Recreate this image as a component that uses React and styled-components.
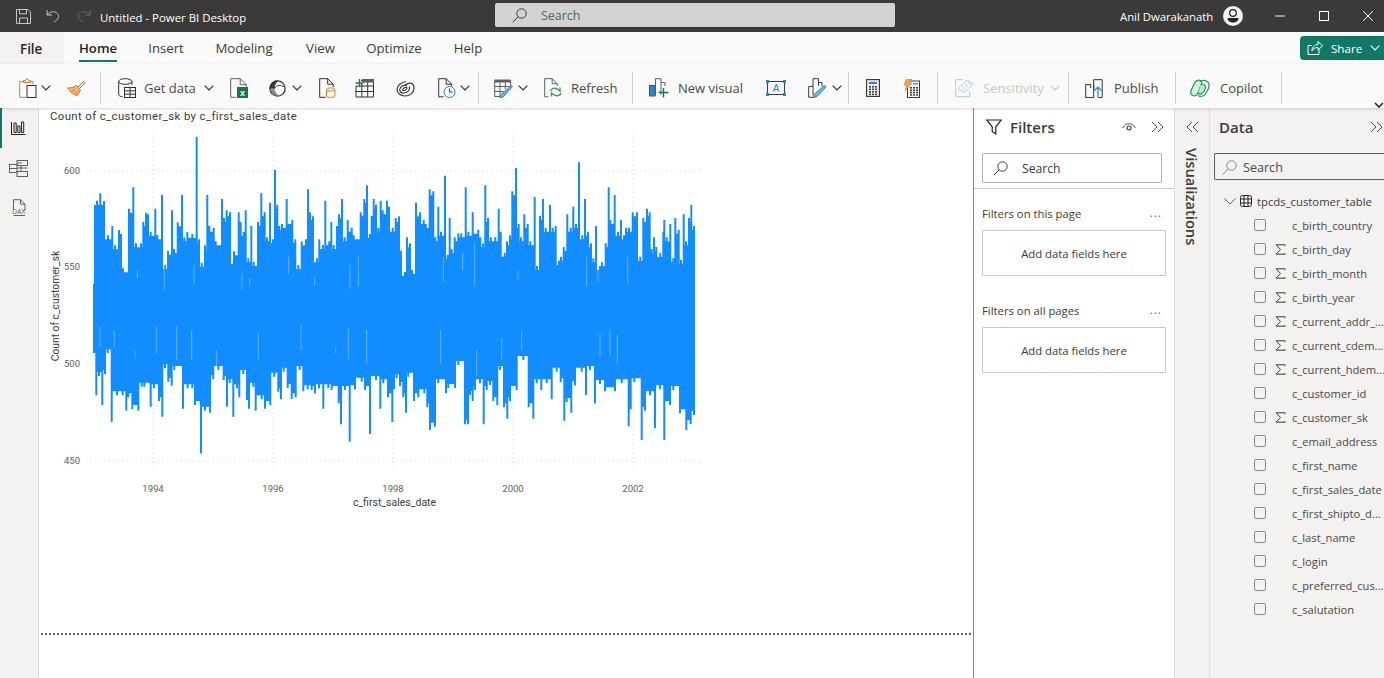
import React from "react";
import styled, { createGlobalStyle } from "styled-components";

const UI = `"Open Sans", "Noto Sans", "Liberation Sans", sans-serif`;
const DARK = "#323130";
const ORANGE = "#d97a1e";
const GREEN = "#107c41";
const BLUE = "#1a86d0";

const Global = createGlobalStyle`
  html, body { margin: 0; padding: 0; background: #fff; }
  body { font-family: ${UI}; overflow: hidden; }
  * { box-sizing: border-box; }
`;

const Page = styled.div`
  width: 1384px;
  height: 678px;
  display: flex;
  flex-direction: column;
  overflow: hidden;
`;

/* ---------- title bar ---------- */
const TitleBar = styled.header`
  height: 32px;
  background: #3b3a39;
  display: flex;
  align-items: center;
  flex: none;
  color: #fff;
`;
const BarIcon = styled.span`
  display: flex;
  margin-left: ${(p) => p.$ml}px;
`;
const AppTitle = styled.span`
  font-size: 11.4px;
  margin-left: 9px;
  width: 395px;
  margin-top: 3px;
  white-space: nowrap;
`;
const SearchPill = styled.div`
  width: 400px;
  height: 24px;
  margin-top: -2px;
  background: #d2d2d0;
  border-radius: 2px;
  display: flex;
  align-items: center;
  padding-left: 17px;
  gap: 14px;
  color: #3f6b60;
  font-size: 12.4px;
`;
const UserName = styled.span`
  font-size: 11.3px;
  margin-left: 225px;
  width: 103px;
  white-space: nowrap;
`;

/* ---------- tabs ---------- */
const TabBar = styled.nav`
  height: 32px;
  background: #fafafa;
  display: flex;
  align-items: stretch;
  flex: none;
  position: relative;
`;
const FileTab = styled.div`
  width: 64px;
  background: #f3f2f1;
  padding: 2px 0 0 20px;
  display: flex;
  align-items: center;
  font-size: 13.4px;
  font-weight: 600;
  color: #252423;
`;
const Tab = styled.div`
  width: ${(p) => p.$w}px;
  margin-left: ${(p) => p.$ml}px;
  padding-top: 4px;
  display: flex;
  align-items: center;
  justify-content: center;
  font-size: 13.2px;
  color: ${(p) => (p.$active ? "#252423" : "#3b3a39")};
  font-weight: ${(p) => (p.$active ? 600 : 400)};
  white-space: nowrap;
  border-bottom: 2px solid ${(p) => (p.$active ? "#117865" : "transparent")};
  height: 30px;
`;
const ShareButton = styled.button`
  margin-left: auto;
  margin-top: 4px;
  width: 84px;
  height: 24px;
  background: #117865;
  border: 0;
  border-radius: 4px 0 0 4px;
  color: #fff;
  font: 400 11.6px ${UI};
  display: flex;
  align-items: center;
  padding: 0 0 0 7px;
  gap: 8px;
`;

/* ---------- ribbon ---------- */
const Ribbon = styled.div`
  height: 44px;
  background: #fafafa;
  display: flex;
  align-items: center;
  padding: 4px 0 0 19px;
  flex: none;
  position: relative;
  z-index: 2;
  box-shadow: 0 1px 3px rgba(0, 0, 0, 0.18);
`;
const Tool = styled.span`
  display: flex;
  flex: none;
  margin-left: ${(p) => p.$ml || 0}px;
`;
const ToolLabel = styled.span`
  width: ${(p) => p.$w}px;
  margin-left: ${(p) => p.$ml || 0}px;
  font-size: 13px;
  color: ${(p) => (p.$off ? "#c8c6c4" : "#4a4846")};
  white-space: nowrap;
  flex: none;
`;
const Sep = styled.span`
  width: 1px;
  height: 32px;
  background: #d2d0ce;
  flex: none;
  margin-left: ${(p) => p.$ml}px;
`;
const RibbonCollapse = styled.span`
  position: absolute;
  right: 0;
  bottom: 0;
  display: flex;
`;

/* ---------- body ---------- */
const Main = styled.main`
  flex: 1;
  display: flex;
  min-height: 0;
`;
const NavRail = styled.aside`
  width: 39px;
  background: #f3f2f1;
  border-right: 1px solid #dcdbd9;
  flex: none;
  display: flex;
  flex-direction: column;
`;
const NavItem = styled.div`
  height: 40px;
  padding-right: 3px;
  display: flex;
  align-items: center;
  justify-content: center;
  border-left: 2px solid ${(p) => (p.$active ? "#117865" : "transparent")};
`;
const Canvas = styled.section`
  width: 935px;
  flex: none;
  background: #fff;
  border-right: 1px solid #8a8886;
  padding-top: 1px;
  display: flex;
  flex-direction: column;
`;
const ChartTitle = styled.div`
  height: 13px;
  line-height: 14px;
  margin-left: 11px;
  font-size: 11.4px;
  color: #3b3a39;
  font-family: "Roboto", "Liberation Sans", sans-serif;
  letter-spacing: 0.38px;
  white-space: nowrap;
`;
const ChartSvg = styled.svg`
  display: block;
  flex: none;
`;
const PageEnd = styled.div`
  margin: 111px 0 0 2px;
  width: 931px;
  height: 2px;
  background-image: repeating-linear-gradient(90deg, #605e5c 0 2px, transparent 2px 4px);
`;

/* ---------- filters ---------- */
const FiltersPane = styled.aside`
  width: 200px;
  flex: none;
  background: #fff;
  display: flex;
  flex-direction: column;
`;
const PaneHead = styled.div`
  height: 38px;
  display: flex;
  align-items: center;
  padding-left: ${(p) => p.$pl}px;
  flex: none;
`;
const PaneTitle = styled.span`
  font-size: 15px;
  font-weight: 600;
  color: #3b3a39;
  margin-left: ${(p) => p.$ml || 0}px;
`;
const FilterSearch = styled.div`
  margin: 7px 0 0 8px;
  width: 180px;
  height: 30px;
  border: 1px solid #b3b0ad;
  border-radius: 2px;
  display: flex;
  align-items: center;
  padding-left: 10px;
  gap: 14px;
  font-size: 12.2px;
  color: #3b3a39;
  flex: none;
`;
const PaneRule = styled.div`
  height: 1px;
  background: #c8c6c4;
  margin-top: 5px;
  flex: none;
`;
const FilterHead = styled.div`
  display: flex;
  align-items: center;
  justify-content: space-between;
  margin: ${(p) => p.$mt}px 12px 0 8px;
  height: 18px;
  font-size: 11.3px;
  color: #3b3a39;
`;
const Dots = styled.span`
  color: #2b7cd3;
  font-size: 12px;
  letter-spacing: 1px;
  line-height: 10px;
`;
const DropBox = styled.div`
  margin: 8px 0 0 8px;
  width: 184px;
  height: 46px;
  border: 1px solid #c8c6c4;
  border-radius: 1px;
  display: flex;
  align-items: center;
  justify-content: center;
  font-size: 11.3px;
  color: #3b3a39;
  flex: none;
`;

/* ---------- visualizations strip ---------- */
const VizStrip = styled.aside`
  width: 36px;
  flex: none;
  background: #f3f2f1;
  border-left: 1px solid #e1dfdd;
  border-right: 1px solid #e1dfdd;
  display: flex;
  flex-direction: column;
  align-items: center;
  padding-top: 13px;
`;
const VizLabel = styled.span`
  writing-mode: vertical-rl;
  font-size: 14.7px;
  font-weight: 600;
  color: #3b3a39;
  margin-top: 15px;
  line-height: 16px;
`;

/* ---------- data ---------- */
const DataPane = styled.aside`
  flex: 1;
  min-width: 0;
  background: #f3f2f1;
  display: flex;
  flex-direction: column;
  position: relative;
`;
const DataSearch = styled.div`
  margin: 7px 0 0 4px;
  height: 27px;
  border: 1px solid #605e5c;
  border-right: 0;
  border-radius: 2px 0 0 2px;
  display: flex;
  align-items: center;
  padding: 1px 0 0 7px;
  gap: 6px;
  font-size: 12.6px;
  color: #4a4846;
  flex: none;
`;
const TableRow = styled.div`
  height: 24px;
  margin-top: 9px;
  padding-left: 14px;
  display: flex;
  align-items: center;
  font-size: 11.3px;
  color: #3b3a39;
  flex: none;
  white-space: nowrap;
`;
const FieldRow = styled.div`
  height: 24px;
  padding-left: 44px;
  display: flex;
  align-items: center;
  flex: none;
  font-size: 11.2px;
  color: #4a4846;
  white-space: nowrap;
`;
const Check = styled.span`
  width: 12px;
  height: 12px;
  border: 1px solid #8a8886;
  border-radius: 2px;
  flex: none;
`;
const SigmaSlot = styled.span`
  width: 26px;
  padding-left: 9px;
  display: flex;
  flex: none;
`;
const CollapseAbs = styled.span`
  margin-left: auto;
  display: flex;
`;

/* ---------- icons ---------- */
const Svg = ({ w, h, children, stroke = DARK, sw = 1 }) => (
  <svg width={w} height={h} viewBox={`0 0 ${w} ${h}`} fill="none" stroke={stroke} strokeWidth={sw}>
    {children}
  </svg>
);
const Chevron = ({ color = DARK }) => (
  <Svg w={10} h={6} stroke={color} sw={1.2}><path d="M.7.7 5 5 9.3.7" /></Svg>
);
const DoubleRight = ({ color = "#4a4846" }) => (
  <Svg w={14} h={12} stroke={color}><path d="M1 1l5 5-5 5M7 1l5 5-5 5" /></Svg>
);
const DoubleLeft = () => (
  <Svg w={13} h={12} stroke="#4a4846"><path d="M6 1 1 6l5 5M12 1 7 6l5 5" /></Svg>
);
const Magnifier = ({ color = DARK, size = 15 }) => (
  <svg width={size} height={size} viewBox="0 0 15 15" fill="none" stroke={color}>
    <circle cx="9.5" cy="5.5" r="4.7" />
    <path d="M6 9 .8 14.2" />
  </svg>
);
const Sigma = () => (
  <Svg w={11} h={11} stroke="#3b3a39"><path d="M10 2V.8H1l4.5 4.7L1 10.2h9V9" /></Svg>
);

const SaveIcon = () => (
  <Svg w={15} h={15} stroke="#c8c6c4">
    <path d="M.5.5h11.5l2.5 2.5v11.5H.5z" />
    <path d="M3.5.8v4h7V.8M3.5 14.3V9h8v5.3" />
  </Svg>
);
const UndoIcon = ({ color = "#c8c6c4", flip }) => (
  <svg width="14" height="14" viewBox="0 0 14 14" fill="none" stroke={color} style={flip ? { transform: "scaleX(-1)" } : undefined}>
    <path d="M1 1v5h5M1 6c3-4 8-4 10.500-1.500 2 2.500 1 6-3.500 8.500" />
  </svg>
);
const Avatar = () => (
  <svg width="20" height="20" viewBox="0 0 20 20">
    <circle cx="10" cy="10" r="10" fill="#f3f2f1" />
    <circle cx="10" cy="7" r="3.300" fill="none" stroke="#252423" strokeWidth="1.300" />
    <path d="M4.500 12h11c0 3-2.500 4.500-5.500 4.500S4.500 15 4.500 12z" fill="#252423" />
  </svg>
);
const ShareIcon = () => (
  <Svg w={16} h={16} stroke="#fff">
    <path d="M12 9.500V14.500H1V5.500H4.500" />
    <path d="M5 11c0-4 2.500-6.500 6-6.500V1.500L15.500 6 11 10V7.500c-3 0-5 1-6 3.500z" />
  </Svg>
);

const ClipboardIcon = () => (
  <Svg w={18} h={20}>
    <path stroke={ORANGE} d="M4.500 3.500H.7v15.800h6M11.500 3.500H14V6.500M4.500 4.500v-2h2a1.500 1.500 0 0 1 3 0h2v2z" />
    <rect x="8" y="7.500" width="9" height="12" fill="#fafafa" />
  </Svg>
);
const BrushIcon = () => (
  <Svg w={19} h={17}>
    <path d="M11 7 16.800 1.500 18 2.800 12.500 8.500" stroke="#6b6a69" />
    <path d="M9.500 5.500 13.500 10l-3 5.500C7 15 3 12 .5 8l5.500-.5z" fill="#f5b56e" stroke={ORANGE} />
    <path d="M4 12.500 8 9M7.500 14.500l3-3.500" stroke={ORANGE} />
  </Svg>
);
const GetDataIcon = () => (
  <Svg w={18} h={20}>
    <path d="M.7 3.500v13c0 1 1.500 2 3.800 2.300M14 3.500V7" />
    <ellipse cx="7.300" cy="3.500" rx="6.600" ry="2.800" />
    <rect x="6.500" y="9.500" width="11" height="10" fill="#fafafa" />
    <path d="M6.500 12.800h11M6.500 16.200h11M12 9.500v10" />
  </Svg>
);
const ExcelIcon = () => (
  <svg width="18" height="20" viewBox="0 0 18 20" fill="none" stroke="#605e5c">
    <path d="M.7.700h9.500l6 6v2M.7.700v18.600h5M10.200.700v6h6" />
    <rect x="7" y="9" width="11" height="11" fill={GREEN} stroke="none" />
    <text x="12.500" y="18" textAnchor="middle" fontSize="9" fontWeight="700" fill="#fff" stroke="none" fontFamily="Liberation Sans, sans-serif">x</text>
  </svg>
);
const DatasetHubIcon = () => (
  <Svg w={17} h={17}>
    <circle cx="8.500" cy="8.500" r="7.600" strokeWidth="1.300" stroke="#3b3a39" />
    <path d="M1 9c0-5 3-8 7.500-8C6 3 5 6 5.500 8.500 3.500 8 2 8.200 1 9z" fill="#3b3a39" />
    <path d="M5.500 8.500C5.800 12 8 15 11.500 15.500 8 16.500 2.500 15 1 9c1-.8 2.500-1 4.500-.5z" fill="#8a8886" stroke="none" />
    <path d="M5.500 8.500C8 5 11.500 4.500 15.500 7" stroke="#3b3a39" />
  </Svg>
);
const CylinderDocIcon = () => (
  <Svg w={17} h={20}>
    <path d="M.7 19.300V.700h8l5.500 5.500v2.800M8.700.700v5.500h5.500M.7 19.300h6" />
    <path stroke={ORANGE} d="M7.500 11.500v6.500c0 .8 2 1.400 4.200 1.400s4.200-.6 4.200-1.400v-6.500" />
    <ellipse cx="11.700" cy="11.500" rx="4.200" ry="1.600" stroke={ORANGE} />
  </Svg>
);
const TableAddIcon = () => (
  <svg width="19" height="19" viewBox="0 0 19 19" fill="none" stroke={DARK}>
    <path d="M6 1.500h12.500M18.500 1v17H1V7" />
    <path d="M1 7h17.500M1 12.500h17.500M6.800 4v14M12.700 2v16" />
    <rect x="7" y="0" width="12" height="3.500" fill="#605e5c" stroke="none" />
    <path d="M4.500 0v8M.5 4h8" stroke={GREEN} strokeWidth="1.400" />
  </svg>
);
const SpiralIcon = () => (
  <Svg w={19} h={17} stroke="#3b3a39" sw={1.2}>
    <path d="M9 5.500C13 1.500 18 3 18 8c0 5-4.500 8-9 8-4.500 0-8-3-8-6.500C1 5 6 2 10 1.500" />
    <path d="M13.500 6.500C14.500 10 11 13 7.500 13 5 13 3.500 11.500 3.800 9.500 4.200 6.500 8 4.500 11 5.500" />
    <path d="M6.500 10c1 1 4 .5 4.500-2-.3-1.200-3-1-4.500 2z" />
  </Svg>
);
const ClockDocIcon = () => (
  <Svg w={18} h={20}>
    <path d="M5.500 18.800H.7V.700h7.500l5.500 5.500v2M8.200.700v5.500h5.500" />
    <circle cx="11.500" cy="14" r="5.500" stroke={BLUE} fill="#fafafa" />
    <path d="M11.500 10.500V14h3" stroke={DARK} />
  </Svg>
);
const TableEditIcon = () => (
  <svg width="19" height="19" viewBox="0 0 19 19" fill="none" stroke="#605e5c">
    <path d="M.7 1.500h16v7M.7 1.500v16h6" />
    <rect x="0.500" y="0.500" width="16" height="3" fill="#605e5c" stroke="none" />
    <path d="M.7 7.500h15M.7 12.500h9M6 3.500v14M11.300 3.500v7" />
    <path d="M17.500 6.500l1 1L9 18l-3 .8.800-3z" fill="#73b4e8" stroke={BLUE} />
  </svg>
);
const RefreshIcon = () => (
  <Svg w={18} h={20}>
    <path d="M4.500 18.800H.7V.700h7.500l5 5v2.300M8.200.700v5h5" stroke="#605e5c" />
    <path stroke="#3a9a53" strokeWidth="1.400" d="M6.500 13c.5-2.500 4.500-4 7.500-1.500l2 1.500V9.500M17 15c-.5 2.500-4.500 4-7.500 1.500L7.500 15v3.500" />
  </Svg>
);
const NewVisualIcon = () => (
  <Svg w={20} h={20}>
    <rect x="0.500" y="7.500" width="5.500" height="10.500" fill="#2b88d8" stroke="#1a5fa0" />
    <path d="M6.500 17.500V.700h5.500v16M12.500 4.500H16V8" stroke="#605e5c" />
    <path d="M14.500 10v9.500M9.500 14.500h10" stroke={GREEN} strokeWidth="1.400" />
  </Svg>
);
const TextBoxIcon = () => (
  <svg width="20" height="16" viewBox="0 0 20 16" fill="none" stroke="#3b3a39">
    <rect x="1.500" y="1.500" width="17" height="13" />
    <rect x="0" y="0" width="3" height="3" fill={BLUE} stroke="none" />
    <rect x="17" y="0" width="3" height="3" fill={BLUE} stroke="none" />
    <rect x="0" y="13" width="3" height="3" fill={BLUE} stroke="none" />
    <rect x="17" y="13" width="3" height="3" fill={BLUE} stroke="none" />
    <text x="10" y="12" textAnchor="middle" fontSize="10" fill={BLUE} stroke="none" fontFamily="Liberation Sans, sans-serif">A</text>
  </svg>
);
const VisualEditIcon = () => (
  <Svg w={19} h={20}>
    <path d="M5 17.500V.700h5.500v7M10.500 4.500h3.500v4M.7 19.300V8.500H5M.7 19.300h6" stroke="#3b3a39" />
    <path d="M16.500 7.500l1.500 1.500L9 18.500l-3.500 1 1-3.500z" fill="#73b4e8" stroke={BLUE} />
  </Svg>
);
const CalcIcon = () => (
  <svg width="14" height="18" viewBox="0 0 14 18">
    <rect x=".6" y=".6" width="12.800" height="16.800" fill="none" stroke="#3b3a39" strokeWidth="1.200" />
    <rect x="3" y="2.700" width="8" height="2.300" fill="#2b88d8" />
    {[0, 1, 2].flatMap((c) => [0, 1, 2, 3].map((r) => (
      <rect key={`${c}${r}`} x={3 + c * 3} y={7 + r * 2.500} width="2" height="1.600" fill="#3b3a39" />
    )))}
  </svg>
);
const QuickCalcIcon = () => (
  <svg width="17" height="19" viewBox="0 0 17 19">
    <rect x="4.500" y="2" width="12" height="16.500" fill="none" stroke="#3b3a39" />
    {[0, 1, 2].flatMap((c) => [0, 1, 2, 3].map((r) => (
      <rect key={`${c}${r}`} x={7 + c * 3} y={8 + r * 2.400} width="2" height="1.500" fill="#3b3a39" />
    )))}
    <rect x="10" y="4" width="5" height="1.500" fill="#8a8886" />
    <path d="M3.500 0H9L6.500 4H9L2 12l2-6H1z" fill="#f5a14a" stroke={ORANGE} strokeWidth=".6" />
  </svg>
);
const SensitivityIcon = () => (
  <Svg w={19} h={19} stroke="#a6cfea">
    <path d="M.7.700h7.500M.7.700v17h14V12" />
    <path d="M3 9.500 11 2c1-1 2-1 3 0s4.500 1.500 3.500 3l-8 8.500z" />
    <path d="M7 7.500l3 3M10 5l3 3M12.500 2.500l3 3" />
  </Svg>
);
const PublishIcon = () => (
  <Svg w={19} h={19}>
    <path d="M5.500 5.500H.7v13h5M5.700 18.500h3V5.500M8.700 10.500V.700h8.500V18.500H14M5.700 5.500V9" />
    <path d="M13 19V8.500M9.500 11.500 13 8l3.500 3.500" stroke={BLUE} strokeWidth="1.200" />
  </Svg>
);
const CopilotIcon = () => (
  <Svg w={20} h={18} stroke="#1f9a5a" sw={1.2}>
    <path d="M4.500 4C5.500 1.500 9 0 11 2c1 1 .8 2.500.2 3.500L8 14c-.8 2.300-3.500 3.500-5.500 2.500C.5 15.500.5 13 1.300 11z" fill="#d7efdf" />
    <path d="M10 2.500c3.500-2 8-1 9 2.500.5 2-.5 4.500-1.500 6.500l-2 3.500c-1.500 2.500-5.500 3-7.500 1.500" />
    <path d="M11 5.500c2.500-.8 5 .5 4.500 3.500-.3 2-2 4.500-3.500 5.500-1.500 1-3.500.5-3.800-1" fill="#bde6cc" />
  </Svg>
);
const FunnelIcon = () => (
  <Svg w={16} h={16} stroke="#252423" sw={1.2}>
    <path d="M.8 1h14.400L9.800 7.800V15l-3.600-2.500V7.800z" />
  </Svg>
);
const EyeIcon = () => (
  <Svg w={14} h={9} stroke="#3b3a39">
    <path d="M.7 5C3 1.500 5 .8 7 .8s4 .7 6.300 4.200" />
    <circle cx="7" cy="5" r="2" strokeWidth="1.200" />
  </Svg>
);
const GridGlobeIcon = () => (
  <Svg w={12} h={12} stroke="#252423">
    <rect x=".5" y=".5" width="11" height="11" rx="2" />
    <path d="M4 .5v11M8 .5v11M.5 4h11M.5 8h11" />
  </Svg>
);
const ReportIcon = () => (
  <Svg w={15} h={14} stroke="#252423">
    <path d="M.5 1v12.500h14" />
    <path d="M3 2h2.200v9.500H3zM6.800 5h2.200v6.500H6.800zM10.500 1h2.200v10.500h-2.200z" />
  </Svg>
);
const ModelIcon = () => (
  <Svg w={19} h={17} stroke="#605e5c">
    <rect x="8" y=".5" width="10.500" height="5" />
    <rect x="8" y="11.500" width="10.500" height="5" />
    <rect x=".5" y="4.500" width="7.500" height="8" />
    <path d="M.5 8.500H8M8 8h4v3.500M12 5.500V8h6.500M8 3H13" />
  </Svg>
);
const DaxIcon = () => (
  <svg width="18" height="18" viewBox="0 0 18 18" fill="none" stroke="#605e5c">
    <path d="M3.500 10V.7h7l4.500 4.500v6.300M10.500.7v4.500H15M3.500 16.500h11.500" />
    <text x="9" y="14.500" textAnchor="middle" fontSize="6.500" fill="#605e5c" stroke="none" fontFamily="Liberation Sans, sans-serif">DAX</text>
  </svg>
);

/* ---------- chart data read from the picture (3x crop coordinates) ---------- */
const top1 = [[30,225],[36,212],[46,190],[57,213],[69,316],[82,288],[90,346],[102,300],[108,312],[114,415],[132,236],[145,172],[153,340],[168,340],[175,276],[183,248],[189,253],[197,306],[211,236],[217,316],[231,195],[240,404],[249,362],[261,241],[267,357],[278,277],[291,195],[298,322],[307,306],[322,312],[335,20],[342,328],[350,398],[360,346],[367,195],[373,287],[386,293],[392,334],[411,207],[417,264],[425,241],[435,247],[441,402],[447,364],[461,247],[467,276],[476,306],[482,241],[490,385],[499,288],[506,396],[519,276],[529,189],[539,247],[546,322],[555,218],[564,328],[570,120],[577,224],[583,288],[591,282],[605,207],[622,270],[631,328],[640,405],[650,334],[663,328],[669,178],[675,247],[684,259],[696,385],[703,328],[714,345],[721,212],[733,334],[739,276],[746,345],[756,288],[762,253],[771,207],[779,322],[788,270],[800,293],[806,316],[827,247],[838,207],[846,166],[855,312],[860,258],[866,207],[873,224],[880,293],[887,212],[893,241],[906,212],[912,230]];
const top2 = [[8,293],[17,264],[27,259],[33,362],[45,426],[51,322],[60,340],[66,420],[78,218],[90,247],[101,270],[107,282],[119,178],[130,184],[136,322],[145,230],[153,305],[165,137],[173,374],[179,264],[185,358],[194,322],[205,310],[214,310],[227,172],[235,305],[248,247],[265,299],[271,322],[279,340],[286,166],[294,264],[302,322],[316,322],[326,236],[332,305],[344,368],[351,334],[360,316],[367,184],[378,114],[386,282],[393,322],[403,253],[413,282],[421,334],[434,201],[441,408],[450,258],[459,207],[467,293],[480,224],[488,293],[497,288],[507,392],[513,380],[521,351],[532,253],[542,293],[550,230],[558,282],[567,97],[577,316],[585,207],[594,305],[603,340],[610,385],[618,288],[630,408],[636,397],[647,340],[656,172],[661,270],[674,195],[684,305],[693,270],[702,316],[708,293],[717,293],[728,247],[741,247],[751,380],[760,264],[771,236],[779,247],[785,357],[792,322],[799,351],[811,369],[820,305],[823,270],[830,322],[841,282],[850,385],[856,264],[866,299],[873,390],[881,253],[888,334],[897,264],[904,224],[912,288]];
const bot1 = [[34,226],[42,168],[52,255],[60,162],[68,100],[80,306],[96,226],[113,226],[124,272],[130,232],[142,267],[160,272],[170,200],[178,200],[197,260],[207,205],[222,243],[232,290],[240,145],[250,185],[260,197],[268,150],[294,266],[308,205],[322,205],[330,255],[348,400],[360,272],[375,278],[385,178],[400,150],[416,180],[426,260],[434,190],[445,290],[456,205],[463,232],[475,162],[486,240],[492,266],[505,200],[512,272],[530,238],[540,266],[556,255],[568,170],[580,215],[588,238],[596,155],[608,204],[620,237],[632,232],[644,150],[655,214],[668,208],[680,210],[690,220],[702,205],[715,266],[730,205],[740,210],[761,250],[768,313],[780,210],[794,365],[810,208],[830,185],[840,210],[855,342],[873,180],[886,266],[895,190],[909,232]];
const bot2 = [[7,306],[12,208],[20,175],[30,198],[40,232],[48,278],[55,170],[72,243],[85,232],[103,220],[112,262],[120,330],[135,320],[145,190],[168,220],[175,204],[195,204],[205,135],[225,313],[234,313],[240,225],[248,243],[255,210],[270,190],[281,313],[290,210],[300,195],[310,243],[322,255],[330,150],[342,262],[352,296],[360,243],[380,210],[400,120],[416,262],[430,296],[440,190],[454,210],[470,190],[485,238],[500,155],[512,187],[523,302],[530,246],[544,278],[555,196],[575,155],[588,225],[600,150],[615,250],[630,192],[645,214],[675,214],[695,190],[716,319],[722,268],[733,187],[755,360],[765,272],[780,226],[795,325],[810,208],[823,360],[840,255],[850,210],[870,280],[889,330],[902,313],[912,285]];

/* pale slits inside the solid band: [x, from, to] in the same crop coordinates */
const slitsTop1 = [[157,420,445],[238,405,480],[327,405,462],[471,430,480],[494,445,465],[611,380,432],[689,440,468],[795,405,475],[820,380,470]];
const slitsTop2 = [[160,380,455],[218,370,420],[254,340,465],[384,420,450],[590,380,470],[624,400,455],[713,380,460]];
const slitsBot1 = [[45,20,80],[88,30,80],[150,90,110],[214,20,100],[275,20,120],[320,30,120],[395,90,150],[520,40,120],[648,15,90],[752,85,100],[790,25,120],[845,30,130]];
const slitsBot2 = [[152,30,130],[260,90,170],[335,55,120],[395,35,90],[630,40,110],[660,30,105],[682,45,130]];

const toPts = (list, ox, oy) => list.map(([x, y]) => [ox + x / 3, oy + y / 3]);
const topPts = [...toPts(top1, 85, 130), ...toPts(top2, 390, 130)];
const botPts = [...toPts(bot1, 85, 320), ...toPts(bot2, 390, 320)];

const f = (n) => n.toFixed(1);

function buildEnvelope() {
  const HALF = 1;
  let d = `M93 320 V284 `;
  topPts.forEach(([x, y], i) => {
    d += `H${f(x - HALF)} V${f(y)} H${f(x + HALF)} `;
    const nx = topPts[i + 1];
    if (nx) d += `V${f(Math.min(Math.max(y, nx[1]) + 4, 285))} `;
  });
  d += `H695 V320 `;
  const rev = [...botPts].reverse();
  rev.forEach(([x, y], i) => {
    d += `H${f(x + HALF)} V${f(y)} H${f(x - HALF)} `;
    const nx = rev[i + 1];
    if (nx) d += `V${f(Math.max(Math.min(y, nx[1]) - 4, 345))} `;
  });
  d += `V353 H93 Z`;
  return d;
}
const slit = (list, ox, oy) =>
  list.map(([x, a, b]) => `M${f(ox + x / 3)} ${f(oy + a / 3)}V${f(oy + b / 3)}`).join("");
const ENVELOPE = buildEnvelope();
const SLITS =
  slit(slitsTop1, 85, 130) + slit(slitsTop2, 390, 130) + slit(slitsBot1, 85, 320) + slit(slitsBot2, 390, 320);

const xTicks = [[153, "1994"], [273, "1996"], [393, "1998"], [513, "2000"], [633, "2002"]];
const yTicks = [[171, "600"], [267, "550"], [364, "500"], [461, "450"]];
const AXIS_FONT = "Roboto, Liberation Sans, sans-serif";

const Chart = () => (
  <ChartSvg width="665" height="400" viewBox="39 122 665 400">
    {xTicks.map(([x]) => (
      <line key={x} x1={x} x2={x} y1="133" y2="467" stroke="#dcdcdc" strokeDasharray="1.500 3" />
    ))}
    {yTicks.map(([y]) => (
      <line key={y} x1="86" x2="701" y1={y} y2={y} stroke="#dcdcdc" strokeDasharray="1.500 3" />
    ))}
    <path d={ENVELOPE} fill="#118dff" />
    <path d={SLITS} stroke="#fff" strokeOpacity=".35" strokeWidth="1" fill="none" />
    {yTicks.map(([y, t]) => (
      <text key={t} x="80" y={y + 3} textAnchor="end" fontSize="9.500" fill="#605e5c" fontFamily={AXIS_FONT}>{t}</text>
    ))}
    {xTicks.map(([x, t]) => (
      <text key={t} x={x} y="492" textAnchor="middle" fontSize="9.500" fill="#605e5c" fontFamily={AXIS_FONT}>{t}</text>
    ))}
    <text x="394.500" y="506" textAnchor="middle" fontSize="10.500" fill="#3b3a39" fontFamily={AXIS_FONT}>c_first_sales_date</text>
    <text transform="translate(59 306) rotate(-90)" textAnchor="middle" fontSize="10.300" fill="#3b3a39" fontFamily={AXIS_FONT}>Count of c_customer_sk</text>
  </ChartSvg>
);

const fields = [
  ["c_birth_country", false],
  ["c_birth_day", true],
  ["c_birth_month", true],
  ["c_birth_year", true],
  ["c_current_addr_...", true],
  ["c_current_cdem...", true],
  ["c_current_hdem...", true],
  ["c_customer_id", false],
  ["c_customer_sk", true],
  ["c_email_address", false],
  ["c_first_name", false],
  ["c_first_sales_date", false],
  ["c_first_shipto_d...", false],
  ["c_last_name", false],
  ["c_login", false],
  ["c_preferred_cus...", false],
  ["c_salutation", false],
];

export default function App() {
  return (
    <Page>
      <Global />
      <TitleBar>
        <BarIcon $ml={16}><SaveIcon /></BarIcon>
        <BarIcon $ml={15}><UndoIcon /></BarIcon>
        <BarIcon $ml={17}><UndoIcon color="#6b6a69" flip /></BarIcon>
        <AppTitle>Untitled - Power BI Desktop</AppTitle>
        <SearchPill>
          <Magnifier color="#3b3a39" />
          Search
        </SearchPill>
        <UserName>Anil Dwarakanath</UserName>
        <Avatar />
        <BarIcon $ml={32}><Svg w={10} h={2} stroke="#fff"><path d="M0 1h10" /></Svg></BarIcon>
        <BarIcon $ml={34}><Svg w={10} h={10} stroke="#fff"><rect x=".5" y=".5" width="9" height="9" /></Svg></BarIcon>
        <BarIcon $ml={34}><Svg w={10} h={10} stroke="#fff"><path d="M0 0l10 10M10 0 0 10" /></Svg></BarIcon>
      </TitleBar>

      <TabBar>
        <FileTab>File</FileTab>
        <Tab $ml={15} $w={38} $active>Home</Tab>
        <Tab $ml={32} $w={34}>Insert</Tab>
        <Tab $ml={32} $w={58}>Modeling</Tab>
        <Tab $ml={33} $w={29}>View</Tab>
        <Tab $ml={31} $w={56}>Optimize</Tab>
        <Tab $ml={32} $w={28}>Help</Tab>
        <ShareButton>
          <ShareIcon />
          Share
          <Chevron color="#fff" />
        </ShareButton>
      </TabBar>

      <Ribbon>
        <ClipboardIcon />
        <Tool $ml={4}><Chevron /></Tool>
        <Tool $ml={16}><BrushIcon /></Tool>
        <Sep $ml={14} />
        <Tool $ml={17}><GetDataIcon /></Tool>
        <ToolLabel $ml={8} $w={60}>Get data</ToolLabel>
        <Chevron />
        <Tool $ml={16}><ExcelIcon /></Tool>
        <Tool $ml={21}><DatasetHubIcon /></Tool>
        <Tool $ml={6}><Chevron /></Tool>
        <Tool $ml={17}><CylinderDocIcon /></Tool>
        <Tool $ml={19}><TableAddIcon /></Tool>
        <Tool $ml={22}><SpiralIcon /></Tool>
        <Tool $ml={23}><ClockDocIcon /></Tool>
        <Tool $ml={4}><Chevron /></Tool>
        <Sep $ml={8} />
        <Tool $ml={15}><TableEditIcon /></Tool>
        <Tool $ml={5}><Chevron /></Tool>
        <Tool $ml={16}><RefreshIcon /></Tool>
        <ToolLabel $ml={9} $w={61}>Refresh</ToolLabel>
        <Sep $ml={0} />
        <Tool $ml={16}><NewVisualIcon /></Tool>
        <ToolLabel $ml={9} $w={88}>New visual</ToolLabel>
        <TextBoxIcon />
        <Tool $ml={22}><VisualEditIcon /></Tool>
        <Tool $ml={5}><Chevron /></Tool>
        <Sep $ml={6} />
        <Tool $ml={17}><CalcIcon /></Tool>
        <Tool $ml={23}><QuickCalcIcon /></Tool>
        <Sep $ml={17} />
        <Tool $ml={17}><SensitivityIcon /></Tool>
        <ToolLabel $ml={9} $off $w={67}>Sensitivity</ToolLabel>
        <Chevron color="#c8c6c4" />
        <Sep $ml={8} />
        <Tool $ml={16}><PublishIcon /></Tool>
        <ToolLabel $ml={10} $w={61}>Publish</ToolLabel>
        <Sep $ml={0} />
        <Tool $ml={14}><CopilotIcon /></Tool>
        <ToolLabel $ml={10} $w={61}>Copilot</ToolLabel>
        <Sep $ml={0} />
        <RibbonCollapse>
          <Svg w={10} h={6} stroke="#252423" sw={1.6}><path d="M1 1l4 4 4-4" /></Svg>
        </RibbonCollapse>
      </Ribbon>

      <Main>
        <NavRail>
          <NavItem $active><ReportIcon /></NavItem>
          <NavItem><ModelIcon /></NavItem>
          <NavItem><DaxIcon /></NavItem>
        </NavRail>

        <Canvas>
          <ChartTitle>Count of c_customer_sk by c_first_sales_date</ChartTitle>
          <Chart />
          <PageEnd />
        </Canvas>

        <FiltersPane>
          <PaneHead $pl={12}>
            <FunnelIcon />
            <PaneTitle $ml={8}>Filters</PaneTitle>
            <BarIcon $ml={67}><EyeIcon /></BarIcon>
            <BarIcon $ml={15}><DoubleRight /></BarIcon>
          </PaneHead>
          <FilterSearch>
            <Magnifier color="#3b3a39" />
            Search
          </FilterSearch>
          <PaneRule />
          <FilterHead $mt={15}>Filters on this page<Dots>...</Dots></FilterHead>
          <DropBox>Add data fields here</DropBox>
          <FilterHead $mt={25}>Filters on all pages<Dots>...</Dots></FilterHead>
          <DropBox>Add data fields here</DropBox>
        </FiltersPane>

        <VizStrip>
          <DoubleLeft />
          <VizLabel>Visualizations</VizLabel>
        </VizStrip>

        <DataPane>
          <PaneHead $pl={9}>
            <PaneTitle>Data</PaneTitle>
            <CollapseAbs><DoubleRight /></CollapseAbs>
          </PaneHead>
          <DataSearch>
            <Magnifier color="#8a8886" />
            Search
          </DataSearch>
          <TableRow>
            <Svg w={12} h={7} stroke="#605e5c"><path d="M.5.5 6 6 11.500.5" /></Svg>
            <BarIcon $ml={4}><GridGlobeIcon /></BarIcon>
            <BarIcon $ml={5}>tpcds_customer_table</BarIcon>
          </TableRow>
          {fields.map(([name, sigma]) => (
            <FieldRow key={name}>
              <Check />
              <SigmaSlot>{sigma && <Sigma />}</SigmaSlot>
              {name}
            </FieldRow>
          ))}
        </DataPane>
      </Main>
    </Page>
  );
}
